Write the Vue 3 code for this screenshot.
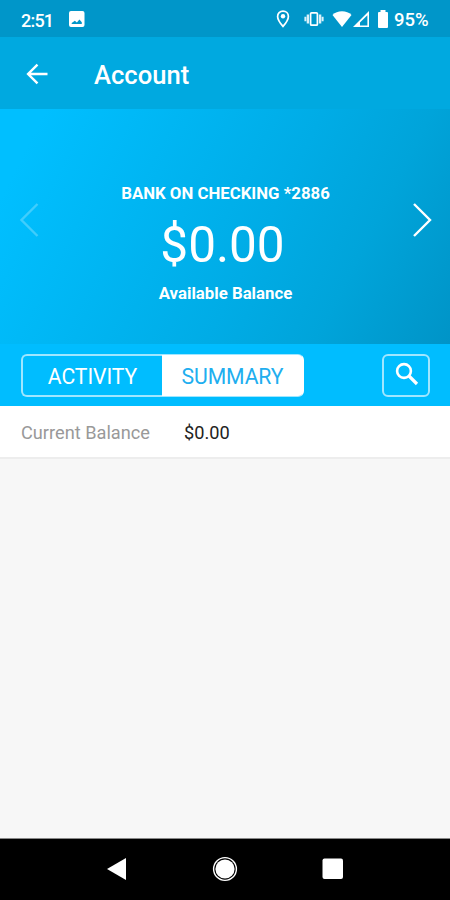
<script setup>
import { ref } from 'vue'

const activeTab = ref('SUMMARY')
const tabs = ['ACTIVITY', 'SUMMARY']
</script>

<template>
  <div class="screen">
    <header class="status">
      <span class="clock">2:51</span>
      <svg class="photo" width="16" height="16" viewBox="0 0 16 16">
        <path fill="#fff" fill-rule="evenodd" d="M2 0H13.5Q15.5 0 15.5 2V14Q15.5 16 13.5 16H2Q0 16 0 14V2Q0 0 2 0ZM2.7 13H12.8V11.2L10.4 8.6L7.9 11.4L5.8 9.8L2.7 12Z" />
      </svg>
      <div class="indicators">
        <svg class="pin" width="14" height="18" viewBox="0 0 14 18">
          <path d="M7 1.2C3.9 1.2 1.6 3.5 1.6 6.4C1.6 10.1 7 16.4 7 16.4S12.4 10.1 12.4 6.4C12.4 3.5 10.1 1.2 7 1.2Z" fill="none" stroke="#fff" stroke-width="1.7" />
          <circle cx="7" cy="6.3" r="2.2" fill="#fff" />
        </svg>
        <svg class="vibrate" width="20" height="16" viewBox="0 0 20 16">
          <rect x="6.6" y="1.8" width="6.8" height="12.4" rx="1" fill="none" stroke="#fff" stroke-width="1.7" />
          <path d="M3.9 3.5V12.5M16.1 3.5V12.5" stroke="#d9f1fa" stroke-width="2.4" />
          <path d="M1.4 5.7V10.3M18.6 5.7V10.3" stroke="#d9f1fa" stroke-width="2" />
        </svg>
        <svg class="wifi" width="20" height="18" viewBox="0 0 20 18">
          <path fill="#fff" d="M0.5 4.9Q4.3 1.2 10 1.2T19.5 4.9L10 17Z" />
        </svg>
        <svg class="signal" width="17" height="18" viewBox="0 0 17 18">
          <path fill="#fff" fill-rule="evenodd" d="M0 17L16 1V17ZM7 15.4H14.4V5.2L7 12.6Z" />
        </svg>
        <svg class="battery" width="12" height="18" viewBox="0 0 12 18">
          <path fill="#fff" d="M3.5 0H8.5V2H10Q11 2 11 3V17Q11 18 10 18H2Q1 18 1 17V3Q1 2 2 2H3.5Z" />
        </svg>
        <span class="percent">95%</span>
      </div>
    </header>

    <div class="appbar">
      <svg width="22" height="22" viewBox="0 0 22 22">
        <path d="M21.5 11H2.5M11.5 1.6L2.1 11L11.5 20.4" fill="none" stroke="#fff" stroke-width="2.4" />
      </svg>
      <h1>Account</h1>
    </div>

    <section class="hero">
      <svg class="arrow dim" width="20" height="34" viewBox="0 0 20 34">
        <path d="M18.5 1L2.5 17L18.5 33" />
      </svg>
      <div class="account">
        <p class="name">BANK ON CHECKING *2886</p>
        <p class="amount">$0.00</p>
        <p class="caption">Available Balance</p>
      </div>
      <svg class="arrow" width="20" height="34" viewBox="0 0 20 34">
        <path d="M2 1L18 17L2 33" />
      </svg>
    </section>

    <nav class="toolbar">
      <div class="tabs">
        <button v-for="tab in tabs" :key="tab" :class="['tab', { active: tab === activeTab }]" @click="activeTab = tab">
          <span>{{ tab }}</span>
        </button>
      </div>
      <button class="search" aria-label="Search">
        <svg width="24" height="24" viewBox="0 0 24 24">
          <circle cx="9" cy="9" r="6.9" fill="none" stroke="#fff" stroke-width="2.6" />
          <path d="M14 14L22 22" stroke="#fff" stroke-width="3.2" />
        </svg>
      </button>
    </nav>

    <div class="row">
      <span class="label">Current Balance</span>
      <span class="value">$0.00</span>
    </div>

    <main class="blank"></main>

    <footer class="navbar">
      <svg width="20" height="24" viewBox="0 0 20 24">
        <path d="M0 12L19 1V23Z" fill="#fff" />
      </svg>
      <svg width="26" height="26" viewBox="0 0 26 26">
        <circle cx="13" cy="13" r="11.4" fill="none" stroke="#fff" stroke-width="1.4" />
        <circle cx="13" cy="13" r="9.6" fill="#fff" />
      </svg>
      <svg width="22" height="22" viewBox="0 0 22 22">
        <rect x="0.5" y="0.5" width="20.5" height="20.5" rx="2" fill="#fff" />
      </svg>
    </footer>
  </div>
</template>

<style>
body {
  margin: 0;
}
</style>

<style scoped>
.screen {
  width: 450px;
  height: 900px;
  display: flex;
  flex-direction: column;
  background: #f7f7f7;
  font-family: Roboto, "Liberation Sans", sans-serif;
  color: #fff;
  overflow: hidden;
}
svg {
  display: block;
  flex: none;
}
p,
h1 {
  margin: 0;
  white-space: nowrap;
}
button {
  border: 0;
  margin: 0;
  padding: 0;
  background: none;
  font-family: inherit;
  color: inherit;
}
.status {
  height: 37px;
  flex: none;
  display: flex;
  align-items: center;
  padding: 0 19px 0 21px;
  box-sizing: border-box;
  background: #0096c9;
  font-size: 18px;
  font-weight: 500;
}
.clock {
  width: 48px;
  padding-top: 3px;
  letter-spacing: -0.8px;
}
.indicators {
  margin-left: auto;
  display: flex;
  align-items: center;
}
.vibrate {
  margin-left: 14px;
}
.wifi {
  margin-left: 8px;
}
.signal {
  margin-left: 1px;
}
.battery {
  margin-left: 7px;
}
.percent {
  width: 37px;
  margin-left: 5px;
  padding-top: 3px;
  font-size: 18.5px;
}
.appbar {
  height: 72px;
  flex: none;
  display: flex;
  align-items: center;
  padding-left: 26px;
  background: #00a9e0;
}
.appbar svg {
  margin-top: 1px;
}
.appbar h1 {
  margin-left: 46px;
  padding-top: 4px;
  font-size: 25.6px;
  font-weight: 500;
  line-height: 30px;
}
.hero {
  height: 235px;
  flex: none;
  display: flex;
  justify-content: space-between;
  padding: 0 18px 0 19px;
  background: linear-gradient(117deg, #00bfff 8%, #00ace6 57%, #00a4da 76%, #0094c7 100%);
}
.arrow {
  margin-top: 94px;
}
.arrow path {
  fill: none;
  stroke: #fff;
  stroke-width: 2.4;
}
.dim {
  opacity: 0.25;
}
.account {
  text-align: center;
}
.name {
  margin-top: 74px;
  font-size: 16.8px;
  font-weight: 700;
  line-height: 20px;
}
.amount {
  margin-top: 12px;
  padding-right: 6px;
  font-size: 49.5px;
  font-weight: 400;
  line-height: 60px;
}
.caption {
  margin-top: 8px;
  font-size: 16.8px;
  font-weight: 700;
  line-height: 20px;
}
.toolbar {
  height: 62px;
  flex: none;
  box-sizing: border-box;
  display: flex;
  justify-content: space-between;
  align-items: center;
  padding: 0 20px 0 21px;
  background: #00bdff;
}
.tabs {
  width: 283px;
  height: 43px;
  box-sizing: border-box;
  display: flex;
  border: 2px solid #a0e6ff;
  border-radius: 6px;
}
.tabs:has(.tab.active:last-child) {
  border-right-color: #fff;
}
.tab {
  flex: 1;
  font-size: 21.2px;
  line-height: 26px;
  padding-top: 3px;
  letter-spacing: -0.1px;
}
.tab:first-child {
  padding-right: 1px;
}
.tab.active {
  background: #fff;
  color: #20aeef;
  box-shadow: 0 0 0 1px #fff;
  border-radius: 0 4px 4px 0;
}
.search {
  width: 48px;
  height: 43px;
  box-sizing: border-box;
  display: flex;
  align-items: center;
  justify-content: center;
  border: 2px solid #a0e6ff;
  border-radius: 6px;
}
.search svg {
  margin-bottom: 3px;
  margin-left: 2px;
}
.row {
  height: 53px;
  flex: none;
  box-sizing: border-box;
  display: flex;
  align-items: center;
  padding: 2px 21px 0;
  background: #fff;
  border-bottom: 2px solid #ededed;
  font-size: 18.2px;
}
.label {
  width: 163px;
  color: #999;
}
.value {
  color: #222;
}
.blank {
  flex: 1;
}
.navbar {
  height: 62px;
  flex: none;
  box-sizing: border-box;
  display: flex;
  justify-content: space-between;
  align-items: center;
  padding: 0 106px 1px 107px;
  background: #000;
  border-top: 1px solid #888;
}
</style>
